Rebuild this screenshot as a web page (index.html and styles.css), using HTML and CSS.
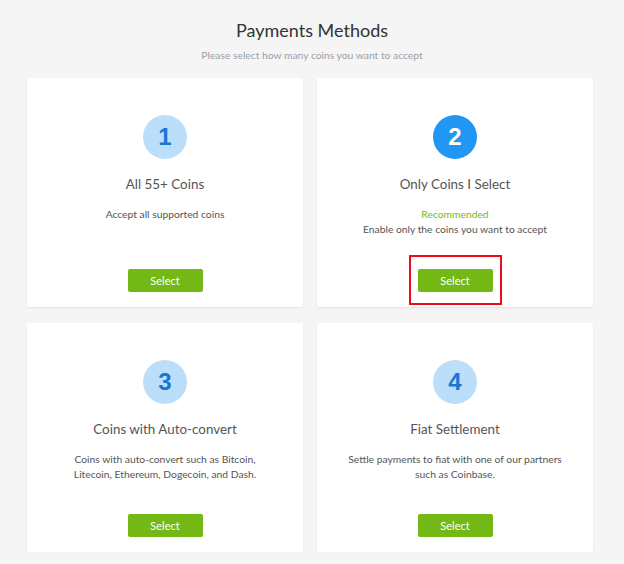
FILE: index.html
```html
<!DOCTYPE html>
<html>
    <head>
        <link rel="stylesheet" href="styles.css">
    </head>

    <body>
        <header class="page-head">
            <h1>Payments Methods</h1>
            <p>Please select how many coins you want to accept</p>
        </header>

        <main class="methods">
            <section class="method">
                <div class="step">1</div>
                <h2>All 55+ Coins</h2>
                <p class="desc">Accept all supported coins</p>
                <div class="action">
                    <button class="select">Select</button>
                </div>
            </section>

            <section class="method">
                <div class="step active">2</div>
                <h2>Only Coins I Select</h2>
                <p class="desc">
                    <span class="hint">Recommended</span><br>
                    Enable only the coins you want to accept
                </p>
                <div class="action highlighted">
                    <button class="select">Select</button>
                </div>
            </section>

            <section class="method">
                <div class="step">3</div>
                <h2>Coins with Auto-convert</h2>
                <p class="desc">
                    Coins with auto-convert such as Bitcoin,<br>
                    Litecoin, Ethereum, Dogecoin, and Dash.
                </p>
                <div class="action">
                    <button class="select">Select</button>
                </div>
            </section>

            <section class="method">
                <div class="step">4</div>
                <h2>Fiat Settlement</h2>
                <p class="desc">
                    Settle payments to fiat with one of our partners<br>
                    such as Coinbase.
                </p>
                <div class="action">
                    <button class="select">Select</button>
                </div>
            </section>
        </main>
    </body>
</html>
```

FILE: styles.css
```css
html, body {
    margin: 0;
    background: #f5f5f5;
}
body {
    font-family: Lato, "Liberation Sans", sans-serif;
    color: #555;
    width: 624px;
}

.page-head {
    text-align: center;
    padding-top: 18px;
}
.page-head > h1 {
    font-size: 18px;
    font-weight: 400;
    line-height: 24px;
    color: #333;
    margin: 0;
}
.page-head > p {
    font-size: 10.3px;
    line-height: 14px;
    color: #9a9ea6;
    margin: 6px 0 0;
}

.methods {
    display: grid;
    grid-template-columns: 276px 276px;
    column-gap: 14px;
    row-gap: 16px;
    padding: 16px 0 0 27px;
}

.method {
    display: flex;
    flex-direction: column;
    align-items: center;
    height: 229px;
    box-sizing: border-box;
    padding-top: 37px;
    background: #fff;
    border-radius: 2px;
    box-shadow: 0 1px 2px rgba(0, 0, 0, 0.08);
    text-align: center;
}

.step {
    width: 44px;
    height: 44px;
    border-radius: 50%;
    background: #bbdefb;
    color: #1976d2;
    font-family: "Liberation Sans", Arial, sans-serif;
    font-weight: 700;
    font-size: 24px;
    line-height: 44px;
}
.step.active {
    background: #2196f3;
    color: #fff;
}

.method > h2 {
    font-size: 13.4px;
    font-weight: 400;
    line-height: 20px;
    color: #555;
    margin: 15px 0 0;
}

.desc {
    font-size: 10.3px;
    line-height: 15px;
    color: #555;
    margin: 13px 0 0;
}
.hint {
    color: #72b81e;
}

.action {
    position: relative;
    margin-top: auto;
    margin-bottom: 15px;
}
.action.highlighted::after {
    content: "";
    position: absolute;
    top: -14px;
    bottom: -13px;
    left: -9px;
    right: -9px;
    border: 2px solid #ec0b1b;
}

.select {
    display: block;
    width: 75px;
    height: 23px;
    border: 0;
    border-radius: 2px;
    background: #74b816;
    color: #fff;
    font-family: Lato, "Liberation Sans", sans-serif;
    font-size: 11px;
    padding: 0;
}
```
